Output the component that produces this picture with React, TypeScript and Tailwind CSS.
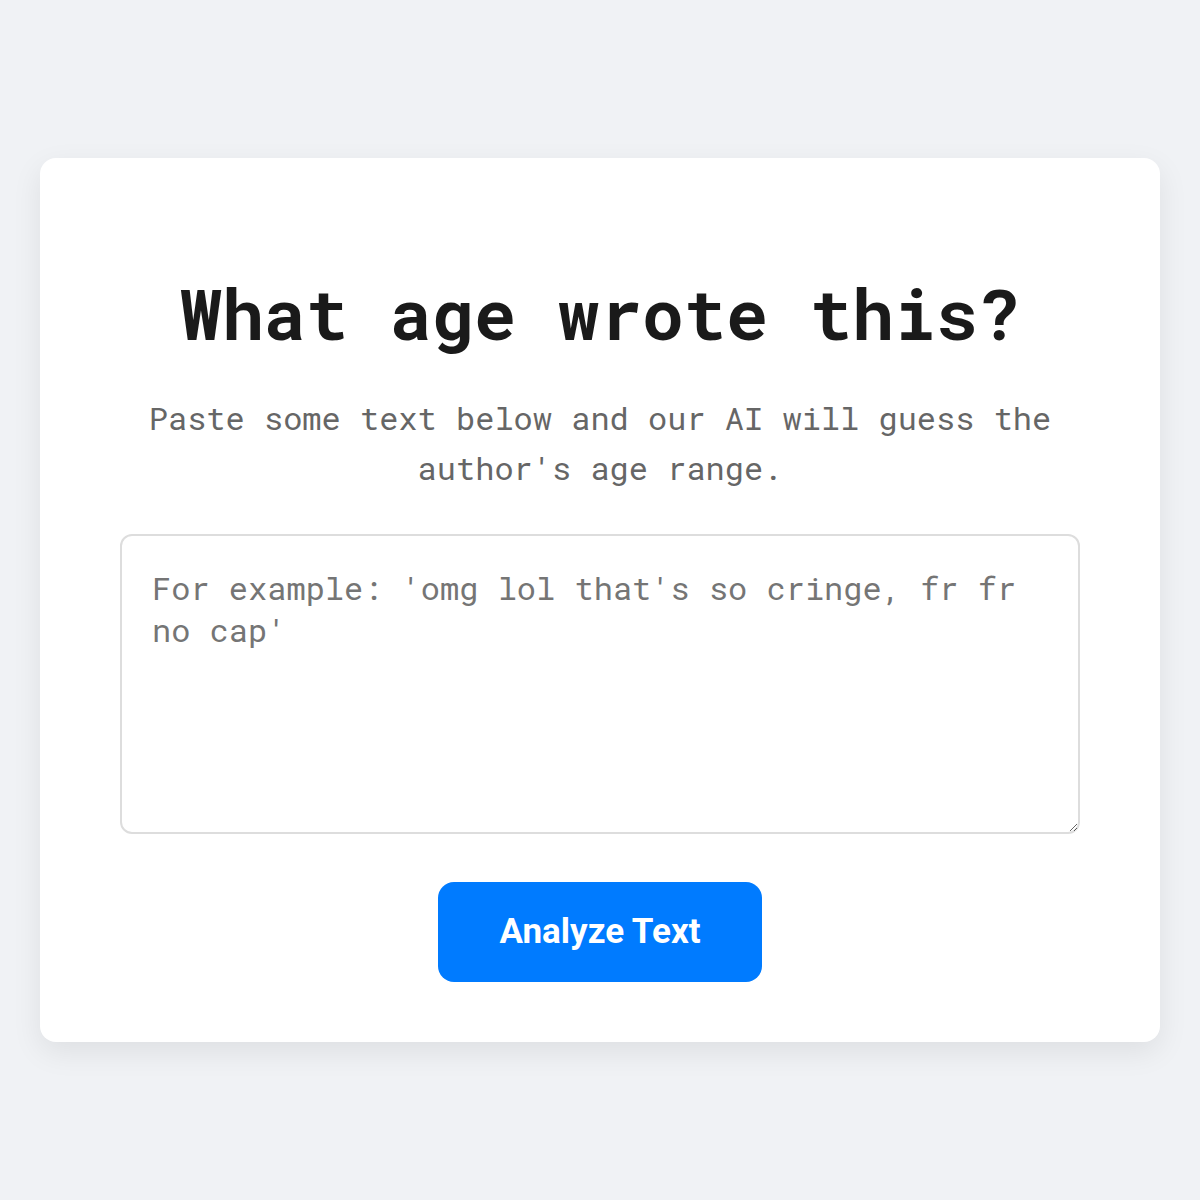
import React from "react";

export default function App() {
  return (
    <div className="w-full h-[1200px] bg-[#f0f2f5] flex items-center justify-center">
      <div className="w-[1120px] h-[884px] bg-white rounded-[16px] shadow-[0_10px_30px_rgba(0,0,0,0.08)] px-[80px] pt-[113px] flex flex-col items-center">
        <h1 className="font-['Roboto_Mono','DejaVu_Sans_Mono',monospace] text-[70px] leading-[84px] font-bold text-[#1a1a1a] text-center">
          What age wrote this?
        </h1>
        <p className="mt-[38px] font-['Roboto_Mono','DejaVu_Sans_Mono',monospace] text-[32px] leading-[50px] text-[#666666] text-center">
          Paste some text below and our AI will guess the author's age range.
        </p>
        <textarea
          className="mt-[41px] w-[960px] h-[300px] border-2 border-[#dddddd] rounded-[12px] px-[30px] pt-[31px] pb-[30px] font-['Roboto_Mono','DejaVu_Sans_Mono',monospace] text-[32px] leading-[42px] text-[#333333] placeholder:text-[#757575] outline-none bg-white"
          placeholder="For example: 'omg lol that's so cringe, fr fr no cap'"
        />
        <button className="mt-[48px] w-[324px] h-[100px] bg-[#007bff] text-white rounded-[16px] font-['Roboto','Liberation_Sans',sans-serif] text-[35px] font-bold">
          Analyze Text
        </button>
      </div>
    </div>
  );
}
